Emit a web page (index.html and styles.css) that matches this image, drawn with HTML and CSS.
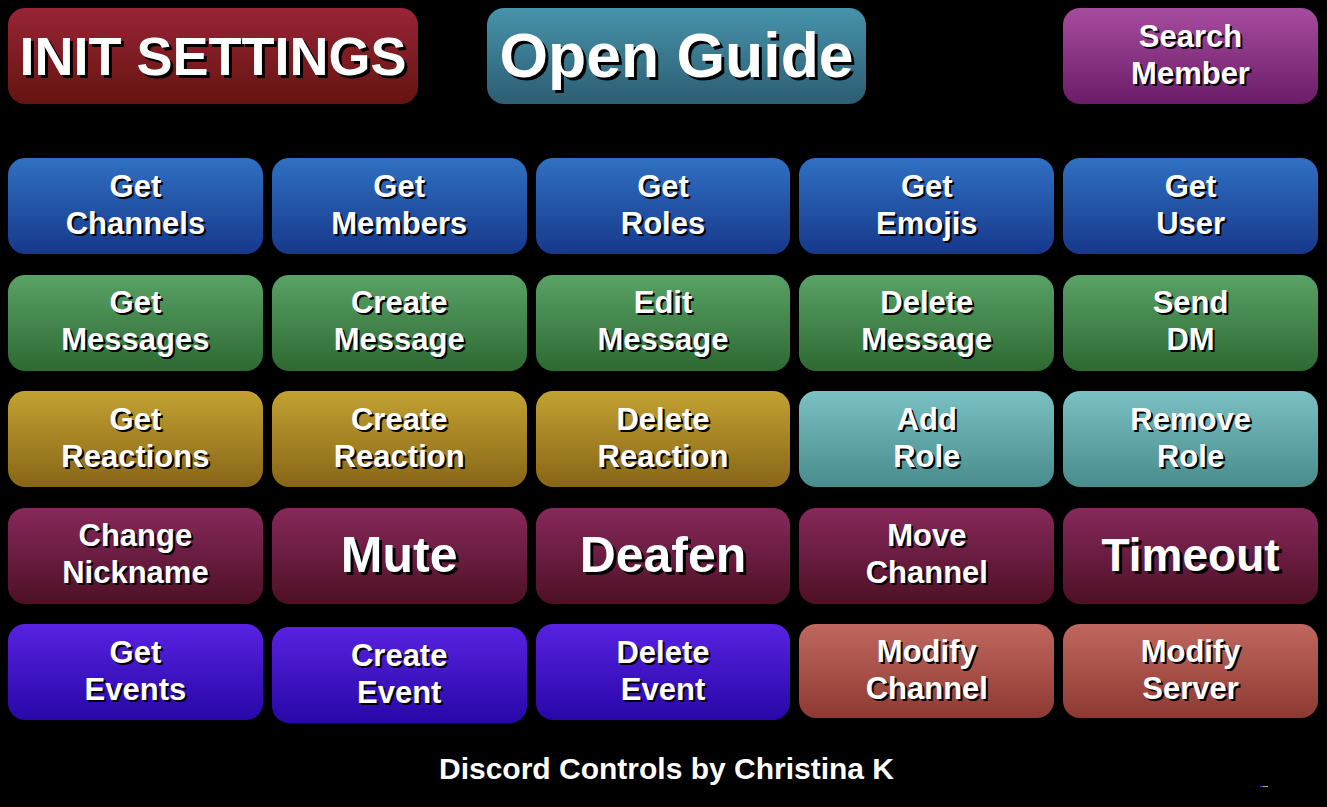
FILE: index.html
```html
<!DOCTYPE html>
<html>
<head>
<meta charset="utf-8">
<title>Discord Controls</title>
<link rel="stylesheet" href="styles.css">
</head>
<body>
<div class="page">
  <div class="top">
    <div class="btn init big">INIT SETTINGS</div>
    <div class="btn guide huge">Open Guide</div>
    <div class="btn search two">Search<br>Member</div>
  </div>
  <div class="grid">
    <div class="btn blue two">Get<br>Channels</div>
    <div class="btn blue two">Get<br>Members</div>
    <div class="btn blue two">Get<br>Roles</div>
    <div class="btn blue two">Get<br>Emojis</div>
    <div class="btn blue two">Get<br>User</div>

    <div class="btn green two">Get<br>Messages</div>
    <div class="btn green two">Create<br>Message</div>
    <div class="btn green two">Edit<br>Message</div>
    <div class="btn green two">Delete<br>Message</div>
    <div class="btn green two">Send<br>DM</div>

    <div class="btn gold two">Get<br>Reactions</div>
    <div class="btn gold two">Create<br>Reaction</div>
    <div class="btn gold two">Delete<br>Reaction</div>
    <div class="btn aqua two">Add<br>Role</div>
    <div class="btn aqua two">Remove<br>Role</div>

    <div class="btn maroon two">Change<br>Nickname</div>
    <div class="btn maroon one">Mute</div>
    <div class="btn maroon one">Deafen</div>
    <div class="btn maroon two">Move<br>Channel</div>
    <div class="btn maroon one small">Timeout</div>

    <div class="btn violet two">Get<br>Events</div>
    <div class="btn violet two lower">Create<br>Event</div>
    <div class="btn violet two">Delete<br>Event</div>
    <div class="btn salmon two short">Modify<br>Channel</div>
    <div class="btn salmon two short">Modify<br>Server</div>
  </div>
  <div class="footer">Discord Controls by Christina K</div>
  <div class="mark"><span class="mark-a"></span><span class="mark-b"></span></div>
</div>
</body>
</html>
```
FILE: styles.css
```css
html, body {
  margin: 0;
  padding: 0;
  background: #000;
}
body {
  font-family: "Liberation Sans", Arial, sans-serif;
  color: #fff;
  width: 1327px;
  height: 807px;
  overflow: hidden;
}
.page {
  position: relative;
  padding: 8px 9px 0 8px;
  height: 807px;
  box-sizing: border-box;
}
.top {
  display: flex;
  align-items: flex-start;
  height: 96px;
}
.btn {
  display: flex;
  align-items: center;
  justify-content: center;
  text-align: center;
  font-weight: bold;
  color: #fff;
  border-radius: 17px;
  box-sizing: border-box;
  height: 96px;
  text-shadow: 2px 2px 0 #000;
}
.init {
  width: 410px;
  background: linear-gradient(#982436, #641410);
  font-size: 54px;
  text-shadow: 3px 3px 0 #000;
  padding-bottom: 0;
}
.guide {
  width: 379px;
  margin-left: 69px;
  background: linear-gradient(#4693ab, #2d5d72);
  font-size: 62.5px;
  text-shadow: 3px 3px 0 #000;
  padding-bottom: 2px;
}
.search {
  width: 255px;
  margin-left: auto;
  background: linear-gradient(#a64c9f, #6b1c67);
}
.two {
  font-size: 31px;
  line-height: 37px;
  padding-bottom: 3px;
}
.search.two {
  font-size: 31px;
  padding-bottom: 2px;
}
.one {
  font-size: 50px;
  line-height: 56px;
  padding-bottom: 1px;
  text-shadow: 3px 3px 0 #000;
}
.one.small {
  font-size: 46px;
}
.grid {
  margin-top: 54px;
  display: grid;
  grid-template-columns: repeat(5, 1fr);
  column-gap: 9px;
  row-gap: 20.5px;
  grid-auto-rows: 96px;
  align-items: start;
}
.lower {
  margin-top: 3px;
}
.short {
  height: 94px;
}
.blue { background: linear-gradient(#3070c2, #16388b); }
.green { background: linear-gradient(#59a266, #2d6932); }
.gold { background: linear-gradient(#c3a232, #886517); }
.aqua { background: linear-gradient(#7bc0c3, #488c8c); }
.maroon { background: linear-gradient(#87295b, #4d1025); }
.violet { background: linear-gradient(#5822e1, #2807a7); }
.salmon { background: linear-gradient(#c0685f, #8d3931); }
.footer {
  margin-top: 31px;
  text-align: center;
  font-weight: bold;
  font-size: 30px;
  line-height: 36px;
  padding-left: 7px;
}
.mark {
  position: absolute;
  left: 1260px;
  top: 786px;
  display: flex;
  height: 1px;
}
.mark-a {
  width: 3px;
  height: 1px;
  background: #4040c0;
}
.mark-b {
  width: 5px;
  height: 1px;
  background: #b0b0a8;
}
```
